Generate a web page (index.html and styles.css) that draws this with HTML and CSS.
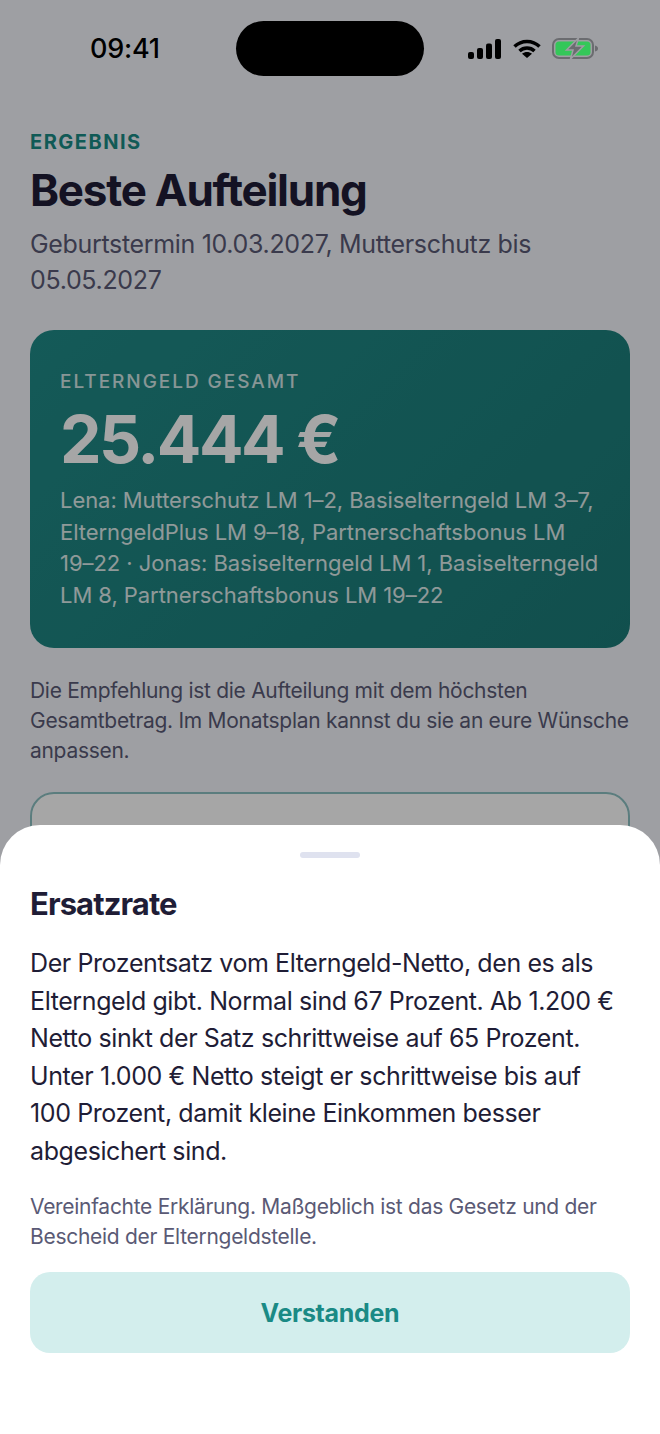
FILE: index.html
```html
<!DOCTYPE html>
<html lang="de">
<head>
    <meta charset="UTF-8">
    <meta name="viewport" content="width=device-width, initial-scale=1.0">
    <title>Ergebnis</title>
    <link rel="stylesheet" href="styles.css">
</head>
<body>
    <div class="screen">
        <header class="status-bar">
            <span class="time">09:41</span>
            <span class="island"></span>
            <span class="status-icons">
                <svg width="33" height="20" viewBox="0 0 33 20">
                    <rect x="0" y="13" width="6" height="7" rx="2"/>
                    <rect x="9" y="9" width="6" height="11" rx="2"/>
                    <rect x="18" y="4.500" width="6" height="15.500" rx="2"/>
                    <rect x="27" y="0" width="6" height="20" rx="2"/>
                </svg>
                <svg class="wifi" width="28" height="19" viewBox="0 0 28 19">
                    <path class="wifi-arc" d="M1.500 7.500C8.500 .7 19.500 .7 26.500 7.500"/>
                    <path class="wifi-arc" d="M6.500 12C10.700 8 17.300 8 21.500 12"/>
                    <path d="M9 14.800C12 12.500 16 12.500 19 14.800L14 19z"/>
                </svg>
                <svg class="battery" width="46" height="23" viewBox="0 0 46 23">
                    <rect x="1" y="2" width="40" height="19" rx="6" fill="none" stroke="#6b6c70" stroke-width="2"/>
                    <rect x="3.500" y="4.500" width="35" height="14" rx="3.500" fill="#34c759"/>
                    <path d="M43 8.500c2 .5 3 1.500 3 3s-1 2.500-3 3z" fill="#6b6c70"/>
                    <path d="M26.500 1 14.500 13h6.500l-2.500 9 13-13h-7.500z" fill="#6b6c70" stroke="#9e9fa3" stroke-width="1.500"/>
                </svg>
            </span>
        </header>

        <main class="content">
            <p class="eyebrow">ERGEBNIS</p>
            <h1>Beste Aufteilung</h1>
            <p class="subtitle">Geburtstermin 10.03.2027, Mutterschutz bis 05.05.2027</p>

            <section class="total-card">
                <p class="total-label">ELTERNGELD GESAMT</p>
                <p class="total-amount">25.444 €</p>
                <p class="total-plan">Lena: Mutterschutz LM 1–2, Basiselterngeld LM 3–7, ElterngeldPlus LM 9–18, Partnerschaftsbonus LM 19–22 · Jonas: Basiselterngeld LM 1, Basiselterngeld LM 8, Partnerschaftsbonus LM 19–22</p>
            </section>

            <p class="hint">Die Empfehlung ist die Aufteilung mit dem höchsten Gesamtbetrag. Im Monatsplan kannst du sie an eure Wünsche anpassen.</p>

            <div class="next-card"></div>
        </main>

        <div class="overlay"></div>

        <aside class="sheet">
            <div class="grabber"></div>
            <h2>Ersatzrate</h2>
            <p class="sheet-text">Der Prozentsatz vom Elterngeld-Netto, den es als Elterngeld gibt. Normal sind 67 Prozent. Ab 1.200 € Netto sinkt der Satz schrittweise auf 65 Prozent. Unter 1.000 € Netto steigt er schrittweise bis auf 100 Prozent, damit kleine Einkommen besser abgesichert sind.</p>
            <p class="sheet-note">Vereinfachte Erklärung. Maßgeblich ist das Gesetz und der Bescheid der Elterngeldstelle.</p>
            <button class="sheet-button">Verstanden</button>
        </aside>
    </div>
</body>
</html>
```

FILE: styles.css
```css
* {
    box-sizing: border-box;
}
body {
    margin: 0;
    font-family: Inter, "Noto Sans", sans-serif;
    color: #1f1d36;
    background-color: #f3f5fb;
}
p, h1, h2 {
    margin: 0;
}
.screen {
    position: relative;
    width: 660px;
    height: 1434px;
    overflow: hidden;
}
.status-bar {
    position: relative;
    z-index: 1;
    display: flex;
    align-items: center;
    height: 97px;
    padding: 0 62px 0 90px;
}
.time {
    width: 146px;
    font-size: 27px;
    font-weight: 550;
    letter-spacing: -0.200px;
    color: #000;
}
.island {
    width: 188px;
    height: 55px;
    border-radius: 28px;
    background-color: #000;
}
.status-icons {
    display: flex;
    align-items: center;
    gap: 11.500px;
    margin-left: auto;
}
.status-icons svg {
    display: block;
    fill: #000;
}
.wifi-arc {
    fill: none;
    stroke: #000;
    stroke-width: 3.500;
}
.content {
    padding: 33px 30px 0;
}
.eyebrow {
    font-size: 20px;
    line-height: 24px;
    font-weight: 700;
    letter-spacing: 1.500px;
    color: #1a8a85;
}
h1 {
    margin-top: 9px;
    font-size: 44px;
    line-height: 54px;
    font-weight: 700;
    letter-spacing: -1.250px;
}
.subtitle {
    margin-top: 9px;
    font-size: 25px;
    line-height: 36px;
    letter-spacing: -0.330px;
    color: #5a5a75;
}
.total-card {
    margin-top: 32px;
    height: 318px;
    padding: 40px 26px 0 30px;
    border-radius: 24px;
    background-image: linear-gradient(135deg, #208a87, #1b7a77);
    color: #fff;
}
.total-label {
    font-size: 19px;
    line-height: 24px;
    font-weight: 500;
    letter-spacing: 1.950px;
    opacity: 0.8;
}
.total-amount {
    margin-top: 5px;
    font-size: 66px;
    line-height: 80px;
    font-weight: 700;
    letter-spacing: -2.500px;
}
.total-plan {
    margin-top: 6px;
    font-size: 22px;
    line-height: 31.500px;
    letter-spacing: -0.060px;
    opacity: 0.85;
}
.hint {
    margin-top: 28px;
    margin-right: -4px;
    font-size: 21px;
    line-height: 30px;
    letter-spacing: -0.290px;
    color: #5a5a75;
}
.next-card {
    margin-top: 26px;
    height: 200px;
    border: 2px solid #8cc0c2;
    border-radius: 24px;
    background-color: #fff;
}
.overlay {
    position: absolute;
    inset: 0;
    background-color: rgba(0, 0, 0, 0.35);
}
.sheet {
    position: absolute;
    left: 0;
    right: 0;
    bottom: 0;
    height: 609px;
    padding: 27px 30px 0;
    border-radius: 40px 40px 0 0;
    background-color: #fff;
}
.grabber {
    width: 60px;
    height: 6px;
    margin: 0 auto;
    border-radius: 3px;
    background-color: #dfe2ef;
}
h2 {
    margin-top: 27px;
    font-size: 31px;
    line-height: 38px;
    font-weight: 700;
    letter-spacing: -0.900px;
}
.sheet-text {
    margin-top: 22px;
    padding-right: 4px;
    font-size: 25px;
    line-height: 37.500px;
    letter-spacing: -0.400px;
}
.sheet-note {
    margin-top: 22px;
    font-size: 21px;
    line-height: 30px;
    letter-spacing: -0.290px;
    color: #5a5a75;
}
.sheet-button {
    display: block;
    width: 100%;
    height: 81px;
    margin-top: 20px;
    border: 0;
    border-radius: 20px;
    background-color: #d3eeed;
    color: #1a8a85;
    font-family: inherit;
    font-size: 25px;
    font-weight: 700;
    letter-spacing: -0.300px;
}
```
